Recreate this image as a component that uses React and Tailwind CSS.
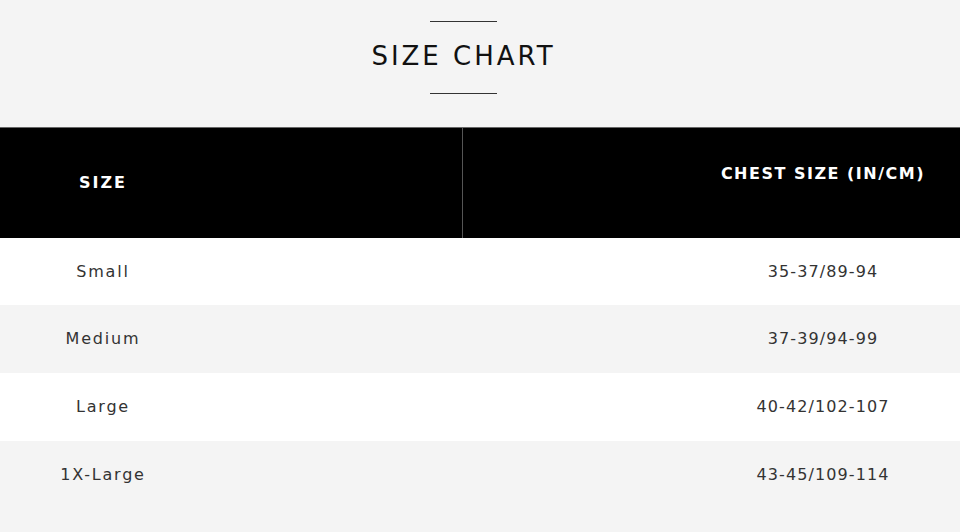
import React from "react";

const rows = [
  { size: "Small", chest: "35-37/89-94", h: "h-[67px]" },
  { size: "Medium", chest: "37-39/94-99", h: "h-[68px]" },
  { size: "Large", chest: "40-42/102-107", h: "h-[68px]" },
  { size: "1X-Large", chest: "43-45/109-114", h: "h-[68px]" },
];

const SizeChart = () => {
  return (
    <div
      className="w-[960px] h-[532px] overflow-hidden bg-[#f4f4f4] text-[#222]"
      style={{ fontFamily: "'DejaVu Sans', 'Liberation Sans', sans-serif" }}
    >
      <div className="w-[927px] flex flex-col items-center pt-[21px] h-[127px]">
        <div className="w-[67px] h-px bg-[#333]"></div>
        <h2 className="mt-[19px] text-[26px] leading-[30px] tracking-[3px] text-[#111]">
          SIZE CHART
        </h2>
        <div className="mt-[22px] w-[67px] h-px bg-[#333]"></div>
      </div>

      <div className="border-t border-[#666] bg-black flex h-[111px]">
        <div className="w-[463px] border-r border-[#555] flex items-center">
          <div className="w-[206px] text-center text-white font-semibold text-[16px] tracking-[2px]">
            SIZE
          </div>
        </div>
        <div className="flex-1 flex justify-end pt-[34px] pr-[35px]">
          <div className="text-white font-semibold text-[16px] tracking-[1.5px]">
            CHEST SIZE (IN/CM)
          </div>
        </div>
      </div>

      {rows.map((row, i) => (
        <div
          key={row.size}
          className={
            "flex items-center text-[16px] text-[#333] " +
            row.h +
            " " +
            (i % 2 === 0 ? "bg-white" : "bg-[#f4f4f4]")
          }
        >
          <div className="w-[206px] text-center tracking-[1.8px]">{row.size}</div>
          <div className="ml-auto w-[274px] text-center tracking-[1.1px]">{row.chest}</div>
        </div>
      ))}
    </div>
  );
};

export default function App() {
  return <SizeChart />;
}
